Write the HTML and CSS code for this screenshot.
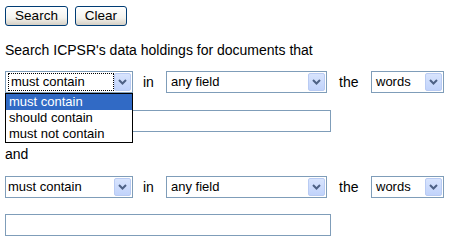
FILE: index.html
```html
<!DOCTYPE html>
<html>
<head>
<meta charset="utf-8">
<link rel="stylesheet" href="styles.css">
</head>
<body>
<div class="page">
  <div class="buttons">
    <button class="btn btn-search" type="button">Search</button>
    <button class="btn btn-clear" type="button">Clear</button>
  </div>
  <p class="intro">Search ICPSR's data holdings for documents that</p>

  <div class="row row-first">
    <div class="sel sel-mode">
      <span class="val"><span class="focus">must contain</span></span>
      <span class="arrow"><svg width="9" height="6" viewBox="0 0 9 6"><path d="M1 1 L4.5 4.5 L8 1" fill="none" stroke="#4d6185" stroke-width="2"/></svg></span>
      <ul class="menu">
        <li class="hl">must contain</li>
        <li>should contain</li>
        <li>must not contain</li>
      </ul>
    </div>
    <span class="lbl lbl-in">in</span>
    <div class="sel sel-field">
      <span class="val">any field</span>
      <span class="arrow"><svg width="9" height="6" viewBox="0 0 9 6"><path d="M1 1 L4.5 4.5 L8 1" fill="none" stroke="#4d6185" stroke-width="2"/></svg></span>
    </div>
    <span class="lbl lbl-the">the</span>
    <div class="sel sel-words">
      <span class="val">words</span>
      <span class="arrow"><svg width="9" height="6" viewBox="0 0 9 6"><path d="M1 1 L4.5 4.5 L8 1" fill="none" stroke="#4d6185" stroke-width="2"/></svg></span>
    </div>
  </div>
  <div class="field-row"><input class="text" type="text"></div>

  <div class="and">and</div>

  <div class="row row-second">
    <div class="sel sel-mode">
      <span class="val">must contain</span>
      <span class="arrow"><svg width="9" height="6" viewBox="0 0 9 6"><path d="M1 1 L4.5 4.5 L8 1" fill="none" stroke="#4d6185" stroke-width="2"/></svg></span>
    </div>
    <span class="lbl lbl-in">in</span>
    <div class="sel sel-field">
      <span class="val">any field</span>
      <span class="arrow"><svg width="9" height="6" viewBox="0 0 9 6"><path d="M1 1 L4.5 4.5 L8 1" fill="none" stroke="#4d6185" stroke-width="2"/></svg></span>
    </div>
    <span class="lbl lbl-the">the</span>
    <div class="sel sel-words">
      <span class="val">words</span>
      <span class="arrow"><svg width="9" height="6" viewBox="0 0 9 6"><path d="M1 1 L4.5 4.5 L8 1" fill="none" stroke="#4d6185" stroke-width="2"/></svg></span>
    </div>
  </div>
  <div class="field-row field-last"><input class="text" type="text"></div>
</div>
</body>
</html>
```

FILE: styles.css
```css
html, body {
  margin: 0;
  padding: 0;
  background: #fff;
}
.page {
  padding: 6px 5px 0 5px;
  font-family: "Liberation Sans", Arial, sans-serif;
  font-size: 14px;
  color: #000;
}
.buttons {
  display: flex;
  gap: 7px;
}
.btn {
  box-sizing: border-box;
  height: 20px;
  margin: 0;
  padding: 0 4px;
  border: 1px solid #003c74;
  border-radius: 3px;
  background: linear-gradient(#ffffff, #f4f3ee 60%, #d6d0c5);
  font-family: "Liberation Sans", Arial, sans-serif;
  font-size: 13.5px;
  color: #000;
  line-height: 18px;
}
.btn-search { width: 63px; }
.btn-clear { width: 52px; }
.intro {
  margin: 17px 0 0 0;
  line-height: 15px;
}
.row {
  display: flex;
  align-items: center;
  height: 22px;
}
.row-first { margin-top: 13px; }
.row-second { margin-top: 14px; }
.sel {
  position: relative;
  box-sizing: border-box;
  height: 22px;
  border: 1px solid #7f9db9;
  background: #fff;
  display: flex;
  align-items: center;
  justify-content: space-between;
  padding: 0 1px 0 1px;
  font-size: 13px;
}
.sel-mode { width: 128px; }
.sel-field { width: 161px; }
.sel-words { width: 73px; }
.val {
  padding-left: 3px;
  line-height: 18px;
  white-space: nowrap;
}
.sel-mode .val { padding-left: 1px; }
.focus {
  display: inline-block;
  box-sizing: border-box;
  width: 106px;
  height: 18px;
  padding-left: 2px;
  border: 1px dotted #000;
  line-height: 16px;
}
.arrow {
  box-sizing: border-box;
  width: 17px;
  height: 18px;
  display: flex;
  align-items: center;
  justify-content: center;
  background: linear-gradient(#d8e4fd, #c1d3fb);
  border: 1px solid #b9cbf3;
  border-radius: 2px;
}
.lbl { display: block; line-height: 15px; }
.lbl-in { width: 33px; padding-left: 10px; box-sizing: border-box; }
.lbl-the { width: 44px; padding-left: 12px; box-sizing: border-box; }
.menu {
  position: absolute;
  left: -1px;
  top: 21px;
  width: 128px;
  box-sizing: border-box;
  margin: 0;
  padding: 0;
  list-style: none;
  border: 1px solid #000;
  background: #fff;
  z-index: 5;
}
.menu li {
  height: 16px;
  line-height: 16px;
  padding-left: 3px;
  white-space: nowrap;
}
.menu li.hl {
  background: #316ac5;
  color: #fff;
}
.field-row {
  margin-top: 17px;
  height: 22px;
}
.field-last { margin-top: 16px; }
.text {
  box-sizing: border-box;
  display: block;
  width: 326px;
  height: 22px;
  margin: 0;
  border: 1px solid #7f9db9;
  padding: 0;
  background: #fff;
}
.and {
  margin-top: 15px;
  line-height: 15px;
}
```
